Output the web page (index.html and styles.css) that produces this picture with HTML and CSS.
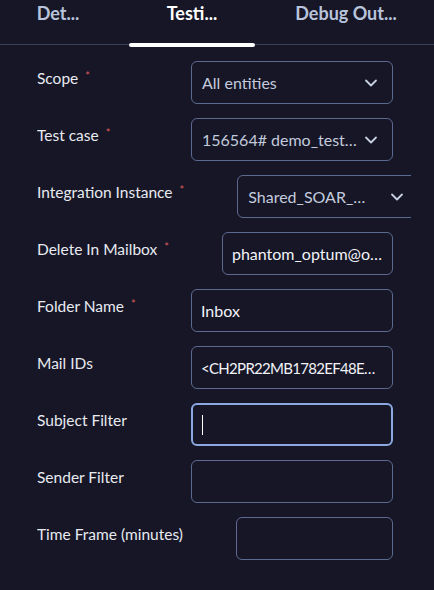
FILE: index.html
```html
<!DOCTYPE html>
<html>

<head>
  <title>Action Test</title>
  <link rel="stylesheet" href="styles.css">
</head>

<body>
  <div class="tabs">
    <div class="tab tab-details">Det...</div>
    <div class="tab tab-testing active">Testi...</div>
    <div class="tab tab-debug">Debug Out...</div>
  </div>

  <div class="form">
    <div class="row">
      <label class="label">Scope<span class="req">*</span></label>
      <div class="field select">
        <span class="value">All entities</span>
        <svg class="chevron" width="14" height="14" viewBox="0 0 14 14"><path d="M2 4.5 L7 9.5 L12 4.5" fill="none" stroke="currentColor" stroke-width="1.8" stroke-linecap="round" stroke-linejoin="round"/></svg>
      </div>
    </div>

    <div class="row">
      <label class="label">Test case<span class="req">*</span></label>
      <div class="field select">
        <span class="value">156564# demo_test…</span>
        <svg class="chevron" width="14" height="14" viewBox="0 0 14 14"><path d="M2 4.5 L7 9.5 L12 4.5" fill="none" stroke="currentColor" stroke-width="1.8" stroke-linecap="round" stroke-linejoin="round"/></svg>
      </div>
    </div>

    <div class="row">
      <label class="label">Integration Instance<span class="req">*</span></label>
      <div class="field select wide">
        <span class="value">Shared_SOAR_…</span>
        <svg class="chevron" width="14" height="14" viewBox="0 0 14 14"><path d="M2 4.5 L7 9.5 L12 4.5" fill="none" stroke="currentColor" stroke-width="1.8" stroke-linecap="round" stroke-linejoin="round"/></svg>
      </div>
    </div>

    <div class="row">
      <label class="label">Delete In Mailbox<span class="req">*</span></label>
      <div class="field text"><span class="value">phantom_optum@o…</span></div>
    </div>

    <div class="row">
      <label class="label">Folder Name<span class="req">*</span></label>
      <div class="field text"><span class="value">Inbox</span></div>
    </div>

    <div class="row">
      <label class="label">Mail IDs</label>
      <div class="field text"><span class="value narrow">&lt;CH2PR22MB1782EF48E…</span></div>
    </div>

    <div class="row">
      <label class="label">Subject Filter</label>
      <div class="field text focused"><span class="caret"></span></div>
    </div>

    <div class="row">
      <label class="label">Sender Filter</label>
      <div class="field text"></div>
    </div>

    <div class="row">
      <label class="label">Time Frame (minutes)</label>
      <div class="field text"></div>
    </div>
  </div>
</body>

</html>
```

FILE: styles.css
```css
body {
  font-family: Lato, "Liberation Sans", sans-serif;
  background-color: #161627;
  color: #e8eaf0;
  margin: 0;
  width: 434px;
  height: 590px;
  overflow: hidden;
}

.tabs {
  display: flex;
  gap: 13px;
  height: 44px;
  border-bottom: 1px solid #3a3f5c;
}

.tab {
  font-size: 18px;
  font-weight: bold;
  color: #b9c4dc;
  text-align: center;
  padding-top: 2px;
  height: 42px;
  white-space: nowrap;
}

.tab-details {
  width: 116px;
}

.tab-testing {
  width: 126px;
}

.tab-debug {
  width: 156px;
}

.tab.active {
  color: #ffffff;
  position: relative;
}

.tab.active::after {
  content: "";
  position: absolute;
  left: 0;
  right: 0;
  bottom: -3px;
  height: 4px;
  border-radius: 2px;
  background-color: #ffffff;
}

.form {
  width: 374px;
  margin-left: 37px;
  padding-top: 16px;
  overflow: hidden;
}

.row {
  display: flex;
  align-items: flex-start;
  margin-bottom: 14px;
}

.label {
  box-sizing: border-box;
  flex: none;
  min-width: 154px;
  padding-right: 53px;
  padding-top: 8px;
  font-size: 15.5px;
  color: #e8eaf0;
  white-space: nowrap;
}

.req {
  color: #dd5a5a;
  font-size: 11px;
  vertical-align: top;
  margin-left: 7px;
}

.field {
  box-sizing: border-box;
  flex: 1;
  min-width: 0;
  height: 43px;
  margin-right: 18px;
  border: 1px solid #5d6a8f;
  border-radius: 6px;
  display: flex;
  align-items: center;
  font-size: 16px;
  white-space: nowrap;
}

.value {
  overflow: hidden;
  text-overflow: ellipsis;
}

.narrow {
  font-size: 15px;
  letter-spacing: -0.7px;
}

.select {
  padding: 0 14px 0 10px;
  justify-content: space-between;
  color: #c3cbdd;
}

.select.wide {
  flex: none;
  width: 182px;
  margin-right: 0;
}

.chevron {
  flex: none;
  color: #c8d0e2;
}

.text {
  padding: 0 9px;
  color: #f2f3f7;
}

.focused {
  border: 2px solid #8ba8e0;
}

.caret {
  width: 1px;
  height: 20px;
  background-color: #ffffff;
}
```
